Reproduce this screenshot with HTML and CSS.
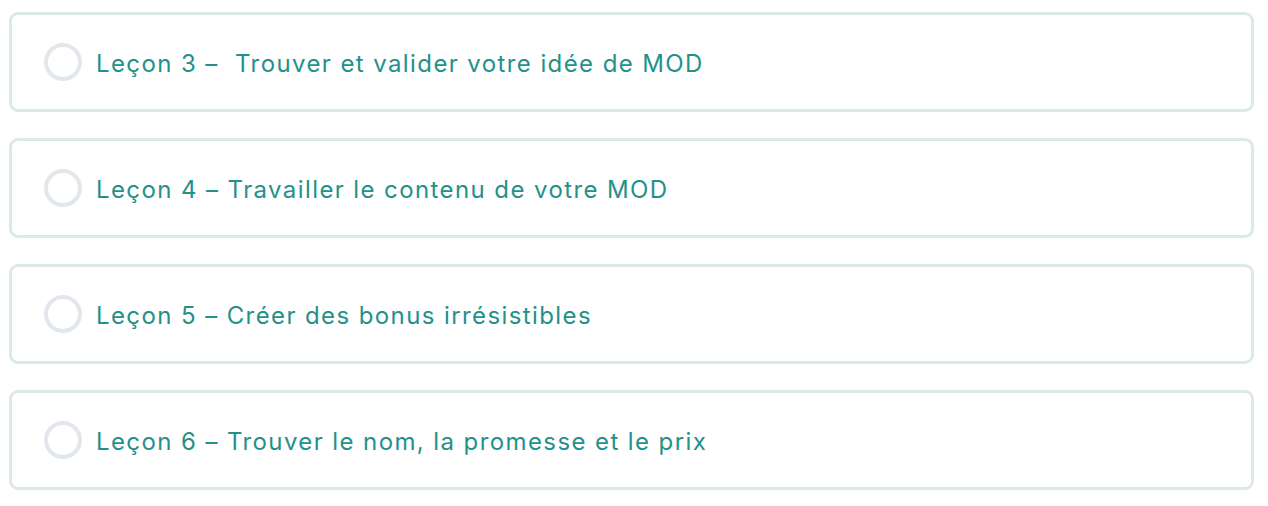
FILE: index.html
```html
<!DOCTYPE html>
<html lang="fr">
<head>
<meta charset="utf-8">
<link rel="stylesheet" href="styles.css">
</head>
<body>
<div class="list">
  <div class="lesson"><span class="check"></span><span class="title">Leçon 3 –&nbsp; Trouver et valider votre idée de MOD</span></div>
  <div class="lesson"><span class="check"></span><span class="title">Leçon 4 – Travailler le contenu de votre MOD</span></div>
  <div class="lesson"><span class="check"></span><span class="title">Leçon 5 – Créer des bonus irrésistibles</span></div>
  <div class="lesson"><span class="check"></span><span class="title">Leçon 6 – Trouver le nom, la promesse et le prix</span></div>
</div>
</body>
</html>
```
FILE: styles.css
```css
html, body { margin: 0; background: #fff; }
body { padding: 12px 14px 0 9px; }
.list { display: flex; flex-direction: column; gap: 26px; }
.lesson {
  height: 100px;
  box-sizing: border-box;
  border: 3px solid #dbe9e9;
  border-radius: 9px;
  display: flex;
  align-items: center;
  padding-left: 32px;
  gap: 14px;
}
.check {
  width: 38px; height: 38px;
  box-sizing: border-box;
  border: 4.5px solid #e2e7ee;
  border-radius: 50%;
  flex: none;
}
.title {
  font-family: Inter, "Open Sans", sans-serif;
  font-size: 24px;
  color: #23918a;
  letter-spacing: 1.4px;
  padding-top: 2px;
}
```
